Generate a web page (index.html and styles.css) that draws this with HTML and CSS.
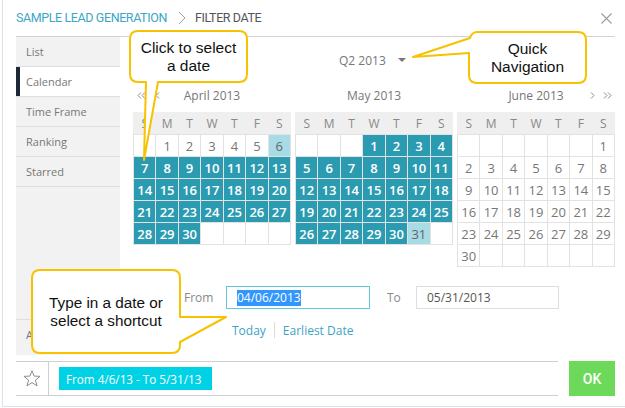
FILE: index.html
```html
<!DOCTYPE html>
<html>
<head>
<meta charset="utf-8">
<link rel="stylesheet" href="styles.css">
</head>
<body>
<div class="dialog">
  <header class="hdr">
    <span class="crumb">SAMPLE LEAD GENERATION</span>
    <svg class="chev" width="8" height="14" viewBox="0 0 8 14"><polyline points="1,1 7,7 1,13" fill="none" stroke="#a0a0a0" stroke-width="1"/></svg>
    <span class="crumb-cur">FILTER DATE</span>
    <svg class="close" width="11" height="11" viewBox="0 0 11 11"><path d="M0.5 0.5 L10.5 10.5 M10.5 0.5 L0.5 10.5" stroke="#9c9c9c" stroke-width="1.1" fill="none"/></svg>
  </header>
  <div class="body">
    <nav class="side">
      <div class="item">List</div>
      <div class="item active">Calendar</div>
      <div class="item">Time Frame</div>
      <div class="item">Ranking</div>
      <div class="item">Starred</div>
      <div class="spacer"></div>
      <div class="item bottom">All Time</div>
    </nav>
    <main class="main">
      <div class="quick">Q2 2013<span class="caret"></span></div>
      <div class="months">
        <section class="month">
          <div class="mtitle">
            <span class="nav left">
              <svg width="9" height="7" viewBox="0 0 9 7"><path d="M4 0.5 L1 3.5 L4 6.5 M8 0.5 L5 3.5 L8 6.5" fill="none" stroke="#8a8a8a" stroke-width="1"/></svg>
              <svg width="5" height="7" viewBox="0 0 5 7"><path d="M4 0.5 L1 3.5 L4 6.5" fill="none" stroke="#8a8a8a" stroke-width="1"/></svg>
            </span>
            <span class="name">April 2013</span>
            <span class="nav"></span>
          </div>
          <div class="dow"><span>S</span><span>M</span><span>T</span><span>W</span><span>T</span><span>F</span><span>S</span></div>
          <div class="days">
            <span></span><span>1</span><span>2</span><span>3</span><span>4</span><span>5</span><span class="e">6</span>
            <span class="s">7</span><span class="s">8</span><span class="s">9</span><span class="s">10</span><span class="s">11</span><span class="s">12</span><span class="s">13</span>
            <span class="s">14</span><span class="s">15</span><span class="s">16</span><span class="s">17</span><span class="s">18</span><span class="s">19</span><span class="s">20</span>
            <span class="s">21</span><span class="s">22</span><span class="s">23</span><span class="s">24</span><span class="s">25</span><span class="s">26</span><span class="s">27</span>
            <span class="s">28</span><span class="s">29</span><span class="s">30</span><span></span><span></span><span></span><span></span>
          </div>
        </section>
        <section class="month">
          <div class="mtitle">
            <span class="nav"></span>
            <span class="name">May 2013</span>
            <span class="nav"></span>
          </div>
          <div class="dow"><span>S</span><span>M</span><span>T</span><span>W</span><span>T</span><span>F</span><span>S</span></div>
          <div class="days">
            <span></span><span></span><span></span><span class="s">1</span><span class="s">2</span><span class="s">3</span><span class="s">4</span>
            <span class="s">5</span><span class="s">6</span><span class="s">7</span><span class="s">8</span><span class="s">9</span><span class="s">10</span><span class="s">11</span>
            <span class="s">12</span><span class="s">13</span><span class="s">14</span><span class="s">15</span><span class="s">16</span><span class="s">17</span><span class="s">18</span>
            <span class="s">19</span><span class="s">20</span><span class="s">21</span><span class="s">22</span><span class="s">23</span><span class="s">24</span><span class="s">25</span>
            <span class="s">26</span><span class="s">27</span><span class="s">28</span><span class="s">29</span><span class="s">30</span><span class="e">31</span><span></span>
          </div>
        </section>
        <section class="month">
          <div class="mtitle">
            <span class="nav"></span>
            <span class="name">June 2013</span>
            <span class="nav right">
              <svg width="5" height="7" viewBox="0 0 5 7"><path d="M1 0.5 L4 3.5 L1 6.5" fill="none" stroke="#8a8a8a" stroke-width="1"/></svg>
              <svg width="9" height="7" viewBox="0 0 9 7"><path d="M1 0.5 L4 3.5 L1 6.5 M5 0.5 L8 3.5 L5 6.5" fill="none" stroke="#8a8a8a" stroke-width="1"/></svg>
            </span>
          </div>
          <div class="dow"><span>S</span><span>M</span><span>T</span><span>W</span><span>T</span><span>F</span><span>S</span></div>
          <div class="days">
            <span></span><span></span><span></span><span></span><span></span><span></span><span>1</span>
            <span>2</span><span>3</span><span>4</span><span>5</span><span>6</span><span>7</span><span>8</span>
            <span>9</span><span>10</span><span>11</span><span>12</span><span>13</span><span>14</span><span>15</span>
            <span>16</span><span>17</span><span>18</span><span>19</span><span>20</span><span>21</span><span>22</span>
            <span>23</span><span>24</span><span>25</span><span>26</span><span>27</span><span>28</span><span>29</span>
            <span>30</span><span></span><span></span><span></span><span></span><span></span><span></span>
          </div>
        </section>
      </div>
      <div class="range">
        <span class="lbl">From</span>
        <span class="inp focus"><span class="sel">04/06/2013</span></span>
        <span class="lbl to">To</span>
        <span class="inp to">05/31/2013</span>
      </div>
      <div class="shortcuts">
        <span>Today</span><span class="sep"></span><span>Earliest Date</span>
      </div>
    </main>
  </div>
  <footer class="foot">
    <div class="fbar">
      <div class="star">
        <svg width="18" height="17" viewBox="0 0 18 17"><polygon points="9,0.8 11.12,6.09 17.08,6.37 12.42,10.11 14,15.88 9,12.6 4,15.88 5.58,10.11 0.92,6.37 6.88,6.09" fill="none" stroke="#8c8c8c" stroke-width="1" stroke-linejoin="round"/></svg>
      </div>
      <div class="tag">From 4/6/13 - To 5/31/13</div>
    </div>
    <div class="ok">OK</div>
  </footer>
</div>

<svg class="callouts" width="625" height="408" viewBox="0 0 625 408">
  <path d="M138 31 H239 Q247 31 247 39 V74 Q247 82 239 82 H158 L144 160 L146 82 H138 Q130 82 130 74 V39 Q130 31 138 31 Z" fill="#fff" stroke="#f7c200" stroke-width="2" stroke-linejoin="round"/>
  <path d="M477 32 H578 Q586 32 586 40 V75 Q586 83 578 83 H477 Q469 83 469 75 V53 L413 57 L470 38 Q472 32 477 32 Z" fill="#fff" stroke="#f7c200" stroke-width="2" stroke-linejoin="round"/>
  <path d="M40 270 H172 Q180 270 180 278 V317 L226 317 L180 342 V345 Q180 353 172 353 H40 Q32 353 32 345 V278 Q32 270 40 270 Z" fill="#fff" stroke="#f7c200" stroke-width="2" stroke-linejoin="round"/>
</svg>
<div class="ct c1">Click to select<br>a date</div>
<div class="ct c2">Quick<br>Navigation</div>
<div class="ct c3">Type in a date or<br>select a shortcut</div>
</body>
</html>
```
FILE: styles.css
```css
* { box-sizing: border-box; margin: 0; padding: 0; }
html, body { width: 625px; height: 408px; overflow: hidden; background: #fff; }
body { position: relative; font-family: "Open Sans", "Noto Sans", sans-serif; color: #777; }

.dialog {
  margin-left: 2px;
  width: 623px;
  height: 407px;
  border-left: 1px solid #dde0e4;
  border-bottom: 1px solid #dde0e4;
  padding: 0 10px 0 13px;
}

.hdr {
  height: 37px;
  border-bottom: 1px solid #d2d2d2;
  display: flex;
  align-items: center;
}
.crumb, .crumb-cur {
  font-family: "Roboto", sans-serif;
  font-size: 12.5px;
  letter-spacing: -0.4px;
  line-height: 16px;
}
.crumb { color: #3ba6c6; }
.crumb-cur { color: #555; }
.chev { margin: 0 9px 0 11px; }
.close { margin-left: auto; margin-right: 3px; }

.body { display: flex; height: 318px; }

.side {
  width: 104px;
  background: #f2f2f2;
  display: flex;
  flex-direction: column;
}
.item {
  height: 30px;
  border-bottom: 1px solid #dedede;
  padding-left: 10px;
  font-size: 11px;
  line-height: 29px;
  color: #777;
}
.item.active { background: #fff; box-shadow: inset 4px 0 0 #1d2837; }
.spacer { flex: 1; }
.item.bottom { border-top: 1px solid #dedede; border-bottom: 0; margin-bottom: 6px; }

.main { flex: 1; padding: 14px 0 0 13px; }

.quick {
  height: 18px;
  display: flex;
  align-items: center;
  padding-left: 206px;
  font-size: 12px;
  color: #777;
}
.caret {
  margin-left: 12px;
  width: 0;
  height: 0;
  border-left: 4px solid transparent;
  border-right: 4px solid transparent;
  border-top: 4px solid #777;
}

.months { display: flex; gap: 4px; margin-top: 17px; align-items: flex-start; }
.month { width: 158px; }
.mtitle {
  display: grid;
  grid-template-columns: 40px 1fr 40px;
  height: 18px;
  align-items: center;
  font-size: 12px;
  color: #777;
  margin-bottom: 8px;
}
.mtitle .name { text-align: center; }
.nav { display: flex; align-items: center; }
.nav.left { padding-left: 4px; gap: 9px; }
.nav.right { justify-content: flex-end; padding-right: 3px; gap: 8px; }

.dow {
  display: grid;
  grid-template-columns: repeat(7, 1fr);
  column-gap: 1px;
  padding: 0 1px;
  height: 22px;
  background: #efefef;
  align-items: center;
  text-align: center;
  font-size: 12px;
  color: #888;
}
.days {
  display: grid;
  grid-template-columns: repeat(7, 1fr);
  grid-auto-rows: 21px;
  gap: 1px;
  padding: 1px;
  background: #e2e2e2;
}
.days span {
  display: flex;
  align-items: center;
  justify-content: center;
  background: #fff;
  color: #777;
  font-size: 13px;
}
.days span.s { background: #2b9bb1; color: #fff; font-weight: 600; }
.days span.e { background: #a7dbe6; color: #666; }

.range {
  display: flex;
  align-items: center;
  margin-top: 19px;
  padding-left: 51px;
  height: 23px;
}
.lbl { width: 42px; font-size: 12px; color: #888; }
.lbl.to { margin-left: 17px; width: 29px; }
.inp {
  width: 144px;
  height: 23px;
  border: 1px solid #dedede;
  display: flex;
  align-items: center;
  padding-left: 10px;
  font-size: 12px;
  color: #555;
}
.inp.to { width: 143px; }
.inp.focus { border-color: #5ccadb; }
.sel { background: #3297fd; color: #fff; line-height: 16px; }

.shortcuts {
  display: flex;
  align-items: center;
  margin-top: 13px;
  padding-left: 99px;
  height: 16px;
  font-size: 12px;
  color: #3ba3c3;
}
.sep { width: 1px; height: 16px; background: #dcdcdc; margin: 0 8px 0 8px; }

.foot { display: flex; margin-top: 6px; }
.fbar {
  width: 542px;
  height: 35px;
  border-top: 1px solid #cfcfcf;
  border-bottom: 1px solid #cfcfcf;
  display: flex;
  align-items: center;
}
.star {
  width: 33px;
  height: 100%;
  border-right: 1px solid #cfcfcf;
  display: flex;
  align-items: center;
  justify-content: center;
}
.tag {
  margin-left: 10px;
  width: 153px;
  height: 23px;
  background: #00d2e6;
  color: #fff;
  font-size: 11.7px;
  padding-left: 7px;
  display: flex;
  align-items: center;
}
.ok {
  margin-left: 11px;
  width: 46px;
  height: 35px;
  background: #6dd95b;
  color: #fff;
  display: flex;
  align-items: center;
  justify-content: center;
  font-family: "Roboto", sans-serif;
  font-size: 14px;
  font-weight: 500;
}

.callouts { position: absolute; left: 0; top: 0; }
.ct {
  position: absolute;
  display: flex;
  align-items: center;
  justify-content: center;
  text-align: center;
  font-family: "Liberation Sans", Arial, sans-serif;
  font-size: 15.5px;
  line-height: 18px;
  color: #111;
}
.c1 { left: 130px; top: 31px; width: 117px; height: 51px; }
.c2 { left: 469px; top: 32px; width: 117px; height: 51px; }
.c3 { left: 32px; top: 270px; width: 148px; height: 83px; font-size: 15.3px; }
```
